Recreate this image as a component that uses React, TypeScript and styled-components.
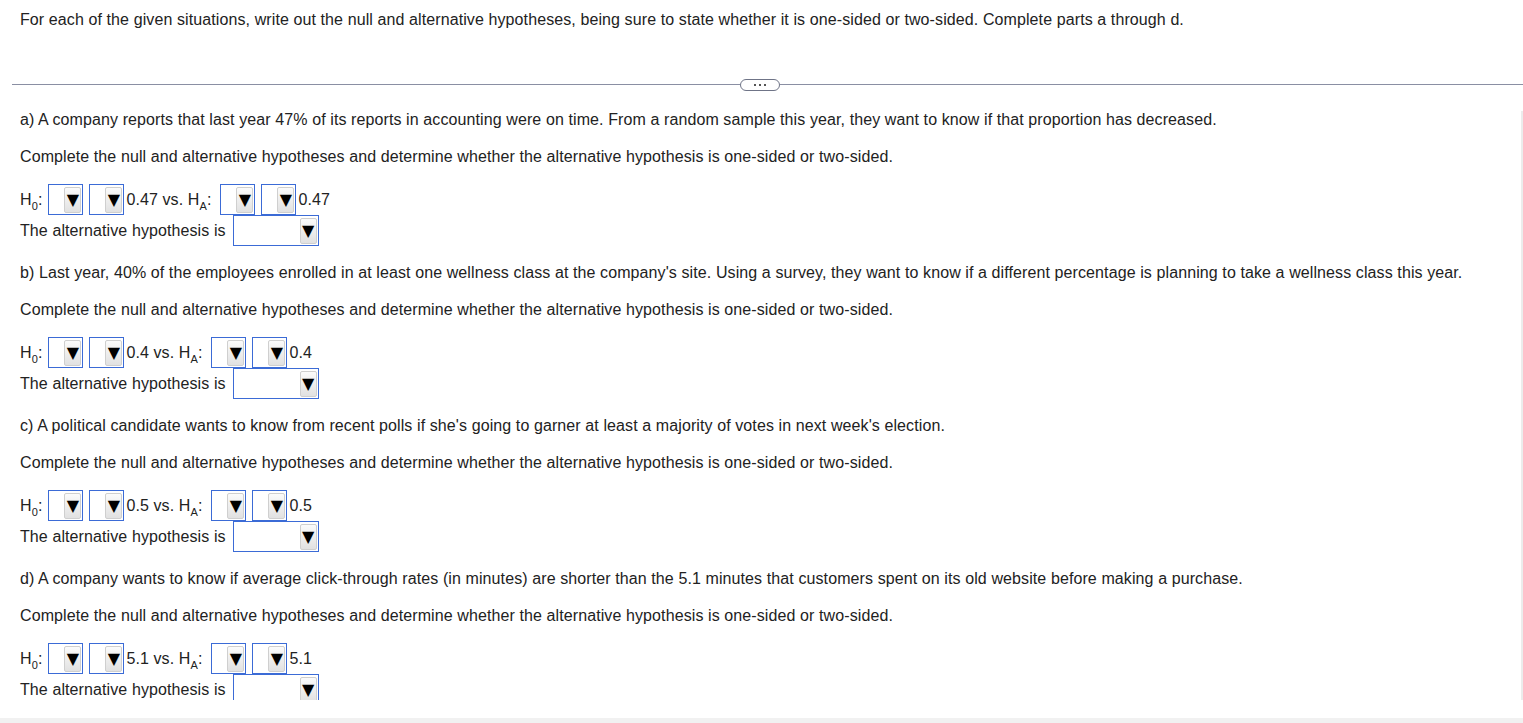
import styled, { createGlobalStyle } from "styled-components";

const GlobalStyle = createGlobalStyle`
  html, body {
    margin: 0;
    padding: 0;
    background: #fff;
  }
  body {
    font-family: "Liberation Sans", Arial, sans-serif;
    font-size: 16px;
    letter-spacing: 0.1px;
    color: #222;
  }
`;

const Page = styled.div`
  display: flex;
  flex-direction: column;
  min-height: 100vh;
  overflow: hidden;
`;

const Intro = styled.p`
  margin: 0;
  padding: 11px 20px 0;
  line-height: 18px;
`;

const Divider = styled.div`
  display: flex;
  align-items: center;
  margin: 49px 0 0 12px;
  height: 13px;
`;

const Line = styled.div<{ $width?: number }>`
  height: 1px;
  background: #8a8fa3;
  ${(p) => (p.$width ? `width: ${p.$width}px;` : "flex: 1;")}
`;

const MoreButton = styled.div`
  box-sizing: border-box;
  width: 40px;
  height: 12px;
  border: 1px solid #6f7487;
  border-radius: 6px;
  background: #fff;
  display: flex;
  align-items: center;
  justify-content: center;
  gap: 3px;
`;

const Dot = styled.span`
  width: 2px;
  height: 2px;
  background: #555;
`;

const Scroller = styled.div`
  margin-top: 20px;
  height: 589px;
  overflow: hidden;
  border-right: 2px solid #ececec;
  padding-left: 20px;
`;

const Section = styled.section`
  padding-bottom: 18px;
`;

const Question = styled.p`
  margin: 0;
  line-height: 18px;
`;

const Instruction = styled.p`
  margin: 19px 0 0;
  line-height: 18px;
`;

const HypRow = styled.div`
  display: flex;
  align-items: center;
  height: 31px;
  margin-top: 18px;
`;

const AltRow = styled.div`
  display: flex;
  align-items: center;
  height: 31px;
`;

const Label = styled.span<{ $ml?: number }>`
  line-height: 18px;
  white-space: pre;
  margin-left: ${(p) => p.$ml ?? 0}px;
`;

const Sub = styled.sub`
  font-size: 11px;
  vertical-align: -5px;
  line-height: 0;
`;

const Box = styled.div<{ $wide?: boolean; $ml?: number }>`
  box-sizing: border-box;
  width: ${(p) => (p.$wide ? 86 : 35)}px;
  height: 31px;
  margin-left: ${(p) => p.$ml ?? 0}px;
  border: 1px solid #3b6bd6;
  background: #fff;
  display: flex;
  align-items: center;
  justify-content: flex-end;
  padding-right: 1px;
`;

const Arrow = styled.div`
  box-sizing: border-box;
  width: 17px;
  height: 26px;
  border: 1px solid #cfcfcf;
  border-radius: 2px;
  background: linear-gradient(#fbfbfb, #e1e1e1);
  display: flex;
  align-items: center;
  justify-content: center;
  font-size: 16px;
  letter-spacing: 0;
  color: #000;
  font-family: "DejaVu Sans", sans-serif;
`;

const FooterBand = styled.div`
  margin-top: 18px;
  flex: 1;
  background: #f1f1f1;
`;

const Dropdown = ({ wide, ml }: { wide?: boolean; ml?: number }) => (
  <Box $wide={wide} $ml={ml}>
    <Arrow>▼</Arrow>
  </Box>
);

interface Part {
  question: string;
  value: string;
}

const parts: Part[] = [
  {
    question:
      "a) A company reports that last year 47% of its reports in accounting were on time. From a random sample this year, they want to know if that proportion has decreased.",
    value: "0.47",
  },
  {
    question:
      "b) Last year, 40% of the employees enrolled in at least one wellness class at the company's site. Using a survey, they want to know if a different percentage is planning to take a wellness class this year.",
    value: "0.4",
  },
  {
    question:
      "c) A political candidate wants to know from recent polls if she's going to garner at least a majority of votes in next week's election.",
    value: "0.5",
  },
  {
    question:
      "d) A company wants to know if average click-through rates (in minutes) are shorter than the 5.1 minutes that customers spent on its old website before making a purchase.",
    value: "5.1",
  },
];

const App = () => (
  <Page>
    <GlobalStyle />
    <Intro>
      For each of the given situations, write out the null and alternative
      hypotheses, being sure to state whether it is one-sided or two-sided.
      Complete parts a through d.
    </Intro>
    <Divider>
      <Line $width={728} />
      <MoreButton>
        <Dot />
        <Dot />
        <Dot />
      </MoreButton>
      <Line />
    </Divider>
    <Scroller>
      {parts.map((part) => (
        <Section key={part.value}>
          <Question>{part.question}</Question>
          <Instruction>
            Complete the null and alternative hypotheses and determine whether
            the alternative hypothesis is one-sided or two-sided.
          </Instruction>
          <HypRow>
            <Label>
              H<Sub>0</Sub>:
            </Label>
            <Dropdown ml={6} />
            <Dropdown ml={6} />
            <Label $ml={2}>{part.value} vs. H</Label>
            <Label>
              <Sub>A</Sub>:
            </Label>
            <Dropdown ml={9} />
            <Dropdown ml={6} />
            <Label $ml={2}>{part.value}</Label>
          </HypRow>
          <AltRow>
            <Label>The alternative hypothesis is</Label>
            <Dropdown wide ml={7} />
          </AltRow>
        </Section>
      ))}
    </Scroller>
    <FooterBand />
  </Page>
);

export default App;
